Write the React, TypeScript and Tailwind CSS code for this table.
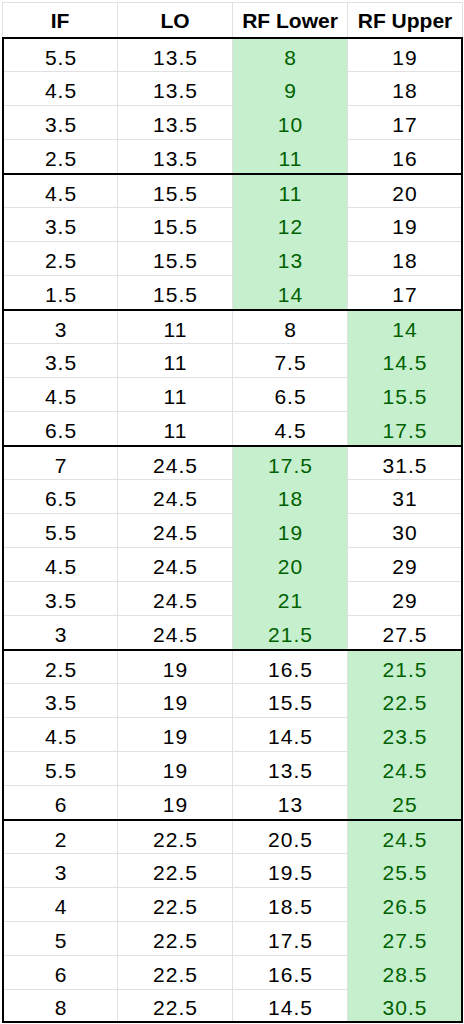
const groups: { green: number; rows: string[][] }[] = [
  { green: 2, rows: [["5.5", "13.5", "8", "19"], ["4.5", "13.5", "9", "18"], ["3.5", "13.5", "10", "17"], ["2.5", "13.5", "11", "16"]] },
  { green: 2, rows: [["4.5", "15.5", "11", "20"], ["3.5", "15.5", "12", "19"], ["2.5", "15.5", "13", "18"], ["1.5", "15.5", "14", "17"]] },
  { green: 3, rows: [["3", "11", "8", "14"], ["3.5", "11", "7.5", "14.5"], ["4.5", "11", "6.5", "15.5"], ["6.5", "11", "4.5", "17.5"]] },
  {
    green: 2,
    rows: [
      ["7", "24.5", "17.5", "31.5"],
      ["6.5", "24.5", "18", "31"],
      ["5.5", "24.5", "19", "30"],
      ["4.5", "24.5", "20", "29"],
      ["3.5", "24.5", "21", "29"],
      ["3", "24.5", "21.5", "27.5"],
    ],
  },
  {
    green: 3,
    rows: [
      ["2.5", "19", "16.5", "21.5"],
      ["3.5", "19", "15.5", "22.5"],
      ["4.5", "19", "14.5", "23.5"],
      ["5.5", "19", "13.5", "24.5"],
      ["6", "19", "13", "25"],
    ],
  },
  {
    green: 3,
    rows: [
      ["2", "22.5", "20.5", "24.5"],
      ["3", "22.5", "19.5", "25.5"],
      ["4", "22.5", "18.5", "26.5"],
      ["5", "22.5", "17.5", "27.5"],
      ["6", "22.5", "16.5", "28.5"],
      ["8", "22.5", "14.5", "30.5"],
    ],
  },
];

const headers = ["IF", "LO", "RF Lower", "RF Upper"];

function Cell({ value, green, first, col }: { value: string; green: boolean; first: boolean; col: number }) {
  return (
    <div
      className={`flex items-center justify-center pt-[4px] pl-[1px] leading-none tracking-[1px]
        ${first ? "" : "border-t"}
        ${col < 3 ? "border-r border-r-[#e1e1e1]" : ""}
        ${green ? "bg-[#c6efce] text-[#006100] border-t-[#c6efce]" : "bg-white text-black border-t-[#e1e1e1]"}
      `}
    >
      {value}
    </div>
  );
}

export default function App() {
  return (
    <div className="min-h-screen w-[464px] bg-white pl-[2px] pt-[2px] font-['Liberation_Sans',Arial,sans-serif] text-[21px] text-black">
      {/* header */}
      <div className="grid h-[35px] w-[461px] grid-cols-[115px_115px_115px_115px] border-l border-t border-[#e1e1e1]">
        {headers.map((h) => (
          <div key={h} className="flex items-center justify-center border-r border-[#e1e1e1] font-bold leading-none">
            {h}
          </div>
        ))}
      </div>

      {/* groups */}
      <div className="w-[461px]">
        {groups.map((g, gi) => (
          <div key={gi} className={`border-x-2 border-t-2 border-black ${gi === groups.length - 1 ? "border-b-2" : ""}`}>
            {g.rows.map((r, ri) => {
              const last = gi === groups.length - 1 && ri === g.rows.length - 1;
              return (
                <div
                  key={ri}
                  className={`grid grid-cols-[114px_115px_115px_113px] ${ri === 0 || last ? "h-[32px]" : "h-[34px]"}`}
                >
                  {r.map((v, ci) => (
                    <Cell key={ci} value={v} green={ci === g.green} first={ri === 0} col={ci} />
                  ))}
                </div>
              );
            })}
          </div>
        ))}
      </div>
    </div>
  );
}
